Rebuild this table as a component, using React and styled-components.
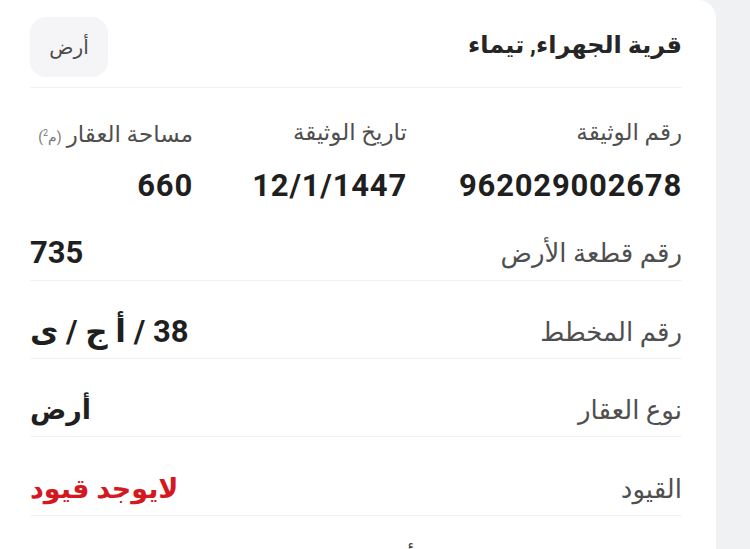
import React from 'react';
import styled, { createGlobalStyle } from 'styled-components';

const Global = createGlobalStyle`
  html, body {
    margin: 0;
    padding: 0;
    height: 100%;
    overflow: hidden;
    background: #f0f1f3;
  }
  #root {
    height: 100%;
  }
`;

const Page = styled.div`
  display: flex;
  justify-content: flex-start;
  height: 100%;
  font-family: Roboto, "DejaVu Sans", sans-serif;
`;

const Card = styled.div`
  direction: rtl;
  width: 716px;
  min-height: 100%;
  box-sizing: border-box;
  background: #ffffff;
  border-radius: 0 18px 0 0;
  padding: 0 34px 0 30px;
  display: flex;
  flex-direction: column;
`;

const Header = styled.div`
  flex-shrink: 0;
  display: flex;
  align-items: center;
  justify-content: space-between;
  height: 88px;
  padding-top: 6px;
  box-sizing: border-box;
  border-bottom: 1.5px solid #f1f2f4;
`;

const Title = styled.h1`
  margin: 0 0 4px;
  font-size: 24px;
  font-weight: 700;
  color: #262626;
`;

const Badge = styled.span`
  display: flex;
  align-items: center;
  justify-content: center;
  width: 78px;
  height: 60px;
  border-radius: 16px;
  background: #f5f5f7;
  color: #4a4a4a;
  font-size: 20px;
`;

const DocGrid = styled.div`
  flex-shrink: 0;
  display: grid;
  grid-template-columns: 275px 214px 1fr;
  padding-top: 31px;
  row-gap: 17px;
`;

const Label = styled.div`
  font-size: ${p => (p.$big ? 26 : 23)}px;
  color: #4f4f4f;
  line-height: 28px;
  white-space: nowrap;
`;

const Unit = styled.span`
  font-size: 14px;
  color: #777;
  margin-right: 5px;
  sup {
    font-size: 9px;
  }
`;

const Value = styled.div`
  font-size: ${p => (p.$arabic ? 27 : 31)}px;
  font-weight: 700;
  color: ${p => (p.$danger ? '#d3191f' : '#1f1f1f')};
  letter-spacing: ${p => (p.$mono ? '0.8px' : '0')};
  line-height: 36px;
  white-space: nowrap;
  direction: ${p => (p.$ltr ? 'ltr' : 'rtl')};
`;

const Row = styled.div`
  flex-shrink: 0;
  display: flex;
  align-items: center;
  justify-content: space-between;
  height: ${p => p.$h}px;
  box-sizing: border-box;
  padding-top: ${p => p.$pt}px;
  border-bottom: 1.5px solid #f1f2f4;
`;

const More = styled.div`
  flex-shrink: 0;
  text-align: center;
  padding-top: 28px;
  font-size: 24px;
  line-height: 30px;
  color: #333;
`;

const docs = [
  { label: 'رقم الوثيقة', value: '962029002678' },
  { label: 'تاريخ الوثيقة', value: '12/1/1447' },
  { label: 'مساحة العقار', value: '660', unit: true },
];

const rows = [
  { label: 'رقم قطعة الأرض', value: '735', ltr: true, h: 77, pt: 22 },
  { label: 'رقم المخطط', value: '38 / أ ج / ى', h: 78, pt: 26 },
  { label: 'نوع العقار', value: 'أرض', arabic: true, h: 78, pt: 26 },
  { label: 'القيود', value: 'لايوجد قيود', arabic: true, danger: true, h: 79, pt: 26 },
];

export default function App() {
  return (
    <>
      <Global />
      <Page>
        <Card>
          <Header>
            <Title>قرية الجهراء, تيماء</Title>
            <Badge>أرض</Badge>
          </Header>

          <DocGrid>
            {docs.map(d => (
              <Label key={d.label}>
                {d.label}
                {d.unit && (
                  <Unit>
                    (م<sup>2</sup>)
                  </Unit>
                )}
              </Label>
            ))}
            {docs.map(d => (
              <Value key={d.value} $mono>
                {d.value}
              </Value>
            ))}
          </DocGrid>

          {rows.map(r => (
            <Row key={r.label} $h={r.h} $pt={r.pt}>
              <Label $big>{r.label}</Label>
              <Value $danger={r.danger} $ltr={r.ltr} $arabic={r.arabic}>
                {r.value}
              </Value>
            </Row>
          ))}

          <More>أظهر المزيد</More>
        </Card>
      </Page>
    </>
  );
}
